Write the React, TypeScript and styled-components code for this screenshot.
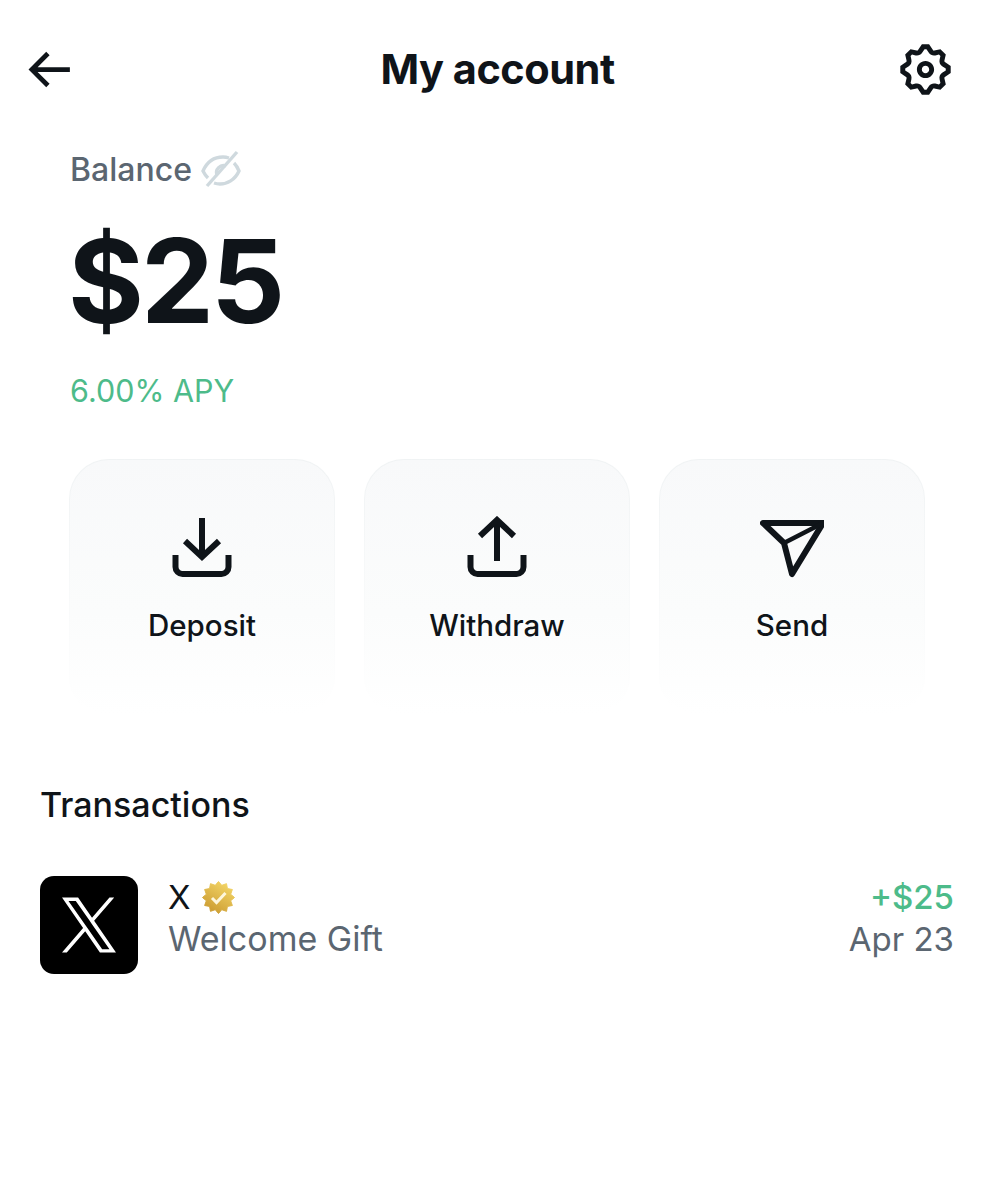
import React from 'react';
import styled, { createGlobalStyle } from 'styled-components';

const GlobalStyle = createGlobalStyle`
  html, body {
    margin: 0;
    padding: 0;
    background: #ffffff;
  }
  body {
    font-family: Inter, "Liberation Sans", sans-serif;
    color: #0f1419;
  }
`;

const Page = styled.div`
  width: 995px;
  height: 1200px;
  overflow: hidden;
  background: #ffffff;
`;

const Header = styled.header`
  display: grid;
  grid-template-columns: 1fr auto 1fr;
  align-items: center;
  height: 60px;
  padding: 39px 20px 0;
`;

const BackIcon = styled.svg`
  width: 57px;
  height: 57px;
  justify-self: start;
  fill: #0f1419;
`;

const GearIcon = styled.svg`
  width: 59px;
  height: 59px;
  justify-self: end;
  margin-right: 20px;
  fill: #0f1419;
`;

const Title = styled.h1`
  margin: 0;
  font-size: 41.5px;
  line-height: 60px;
  font-weight: 700;
  letter-spacing: -0.5px;
`;

const BalanceBlock = styled.section`
  padding: 0 70px;
`;

const BalanceLabel = styled.div`
  display: flex;
  align-items: center;
  gap: 9px;
  margin-top: 46px;
  height: 48px;
  font-size: 32px;
  font-weight: 500;
  color: #5b6671;
`;

const EyeIcon = styled.svg`
  width: 40px;
  height: 38px;
  fill: none;
  stroke: #cfd9de;
  stroke-width: 3.4;
`;

const Amount = styled.div`
  margin: 28px 0 0 -2px;
  font-size: 116px;
  line-height: 120px;
  font-weight: 700;
  letter-spacing: -3px;
`;

const Apy = styled.div`
  margin-top: 30px;
  font-size: 30.5px;
  line-height: 40px;
  color: #4dbb8a;
`;

const Actions = styled.div`
  display: grid;
  grid-template-columns: repeat(3, 266px);
  gap: 29px;
  margin: 48px 0 0 69px;
`;

const ActionCard = styled.button`
  display: flex;
  flex-direction: column;
  align-items: center;
  height: 256px;
  padding: 56px 0 0;
  border: 1px solid transparent;
  border-radius: 40px;
  background:
    linear-gradient(#f8f9fa, #fbfcfc 60%, #ffffff) padding-box,
    linear-gradient(#f0f3f4, #ffffff 97%) border-box;
  font-family: inherit;
  color: #0f1419;
`;

const ActionIcon = styled.svg`
  width: 64px;
  height: 64px;
  fill: none;
  stroke: #0f1419;
  stroke-width: 6;
`;

const ActionLabel = styled.span`
  margin-top: 25px;
  font-size: 29.5px;
  line-height: 40px;
  font-weight: 500;
`;

const Transactions = styled.section`
  padding: 0 41px 0 40px;
`;

const SectionTitle = styled.h2`
  margin: 68px 0 0;
  font-size: 34px;
  line-height: 44px;
  font-weight: 500;
`;

const TxRow = styled.div`
  display: flex;
  align-items: flex-start;
  margin-top: 49px;
`;

const TxLogo = styled.div`
  display: flex;
  align-items: center;
  justify-content: center;
  flex: none;
  width: 98px;
  height: 98px;
  border-radius: 14px;
  background: #000000;
`;

const XMark = styled.svg`
  width: 54px;
  height: 56px;
  fill: #ffffff;
`;

const TxBody = styled.div`
  flex: 1;
  margin-left: 30px;
`;

const TxName = styled.div`
  display: flex;
  align-items: center;
  gap: 11px;
  height: 42px;
  font-size: 33px;
  font-weight: 400;
  color: #0f1419;
`;

const TxNote = styled.div<{ $size: number }>`
  font-size: ${(p) => p.$size}px;
  line-height: 42px;
  color: #5b6671;
`;

const TxSide = styled.div`
  text-align: right;
`;

const TxAmount = styled.div`
  font-size: 33px;
  line-height: 42px;
  font-weight: 500;
  color: #4dbb8a;
`;

const BadgeIcon = styled.svg`
  width: 33px;
  height: 33px;
`;

// gold badge outline, 12 soft points around the centre
const badgePoints = Array.from({ length: 24 }, (_, i) => {
  const r = i % 2 === 0 ? 16 : 12.6;
  const a = (i * Math.PI) / 12 - Math.PI / 2;
  return `${(16.5 + r * Math.cos(a)).toFixed(2)},${(16.5 + r * Math.sin(a)).toFixed(2)}`;
}).join(' ');

export default function App() {
  return (
    <Page>
      <GlobalStyle />
      <Header>
        <BackIcon viewBox="0 0 24 24">
          <path d="M7.414 13l5.043 5.04-1.414 1.42L3.586 12l7.457-7.46 1.414 1.42L7.414 11H21v2H7.414z" />
        </BackIcon>
        <Title>My account</Title>
        <GearIcon viewBox="0 0 24 24">
          <path d="M10.54 1.75h2.92l1.57 2.36c.11.17.32.25.53.21l2.53-.59 2.17 2.17-.58 2.54c-.05.2.04.41.21.53l2.36 1.57v2.92l-2.36 1.57c-.17.12-.26.33-.21.53l.58 2.54-2.17 2.17-2.53-.59c-.21-.04-.42.04-.53.21l-1.57 2.36h-2.92l-1.58-2.36c-.11-.17-.32-.25-.52-.21l-2.54.59-2.17-2.17.58-2.54c.05-.2-.03-.41-.21-.53l-2.35-1.57v-2.92L4.1 8.97c.18-.12.26-.33.21-.53L3.73 5.9 5.9 3.73l2.54.59c.2.04.41-.04.52-.21l1.58-2.36zm1.07 2l-.98 1.47C10.05 6.08 9 6.5 7.99 6.27l-1.46-.34-.6.6.33 1.46c.24 1.01-.18 2.07-1.05 2.64l-1.46.98v.78l1.46.98c.87.57 1.29 1.63 1.05 2.64l-.33 1.46.6.6 1.46-.34c1.01-.23 2.06.19 2.64 1.05l.98 1.47h.78l.97-1.47c.58-.86 1.63-1.28 2.65-1.05l1.45.34.61-.6-.34-1.46c-.23-1.01.18-2.07 1.05-2.64l1.47-.98v-.78l-1.47-.98c-.87-.57-1.28-1.63-1.05-2.64l.34-1.46-.61-.6-1.45.34c-1.02.23-2.07-.19-2.65-1.05l-.97-1.47h-.78zM12 10.5c-.83 0-1.5.67-1.5 1.5s.67 1.5 1.5 1.5c.82 0 1.5-.67 1.5-1.5s-.68-1.5-1.5-1.5zM8.5 12c0-1.93 1.56-3.5 3.5-3.5 1.93 0 3.5 1.57 3.5 3.5s-1.57 3.5-3.5 3.5c-1.94 0-3.5-1.57-3.5-3.5z" />
        </GearIcon>
      </Header>

      <BalanceBlock>
        <BalanceLabel>
          Balance
          <EyeIcon viewBox="0 0 40 38">
            <path d="M7 28q-3-3-5-7C6 12 13 7 22 7q3 0 6 1" />
            <path d="M33 13q3 3 5 8C34 30 26 34 19 34q-3 0-6-1" />
            <path d="M16 25a7 7 0 0 1 9-9" />
            <path d="M36 2L6 36" />
          </EyeIcon>
        </BalanceLabel>
        <Amount>$25</Amount>
        <Apy>6.00% APY</Apy>
      </BalanceBlock>

      <Actions>
        <ActionCard>
          <ActionIcon viewBox="0 0 64 64">
            <path d="M5.500 39v12a7 7 0 0 0 7 7h39a7 7 0 0 0 7-7V39" />
            <path d="M32 2v38" />
            <path d="M15 25l17 16 17-16" />
          </ActionIcon>
          <ActionLabel>Deposit</ActionLabel>
        </ActionCard>
        <ActionCard>
          <ActionIcon viewBox="0 0 64 64">
            <path d="M5.500 39v12a7 7 0 0 0 7 7h39a7 7 0 0 0 7-7V39" />
            <path d="M32 5v40" />
            <path d="M15 20L32 4l17 16" />
          </ActionIcon>
          <ActionLabel>Withdraw</ActionLabel>
        </ActionCard>
        <ActionCard>
          <ActionIcon viewBox="0 0 64 64" strokeLinejoin="round" strokeLinecap="round">
            <path d="M3 7h60L32 58l-8-31z" />
            <path d="M63 7L24 27" strokeWidth="4.500" />
          </ActionIcon>
          <ActionLabel>Send</ActionLabel>
        </ActionCard>
      </Actions>

      <Transactions>
        <SectionTitle>Transactions</SectionTitle>
        <TxRow>
          <TxLogo>
            <XMark viewBox="0 0 1200 1227">
              <path d="M714.163 519.284L1160.89 0H1055.03L667.137 450.887L357.328 0H0L468.492 681.821L0 1226.37H105.866L515.491 750.218L842.672 1226.37H1200L714.137 519.284H714.163ZM569.165 687.828L521.697 619.934L144.011 79.6944H306.615L611.412 515.685L658.88 583.579L1055.08 1150.3H892.476L569.165 687.854V687.828Z" />
            </XMark>
          </TxLogo>
          <TxBody>
            <TxName>
              X
              <BadgeIcon viewBox="0 0 33 33">
                <defs>
                  <linearGradient id="gold" x1="0.8" y1="0" x2="0.2" y2="1">
                    <stop offset="0" stopColor="#f5d869" />
                    <stop offset="1" stopColor="#c9982e" />
                  </linearGradient>
                </defs>
                <polygon points={badgePoints} fill="url(#gold)" stroke="url(#gold)" strokeWidth="1" strokeLinejoin="round" />
                <path d="M10 17l4.500 4.500 9-9.500" fill="none" stroke="#fdf6dc" strokeWidth="3" />
              </BadgeIcon>
            </TxName>
            <TxNote $size={34}>Welcome Gift</TxNote>
          </TxBody>
          <TxSide>
            <TxAmount>+$25</TxAmount>
            <TxNote $size={33}>Apr 23</TxNote>
          </TxSide>
        </TxRow>
      </Transactions>
    </Page>
  );
}
